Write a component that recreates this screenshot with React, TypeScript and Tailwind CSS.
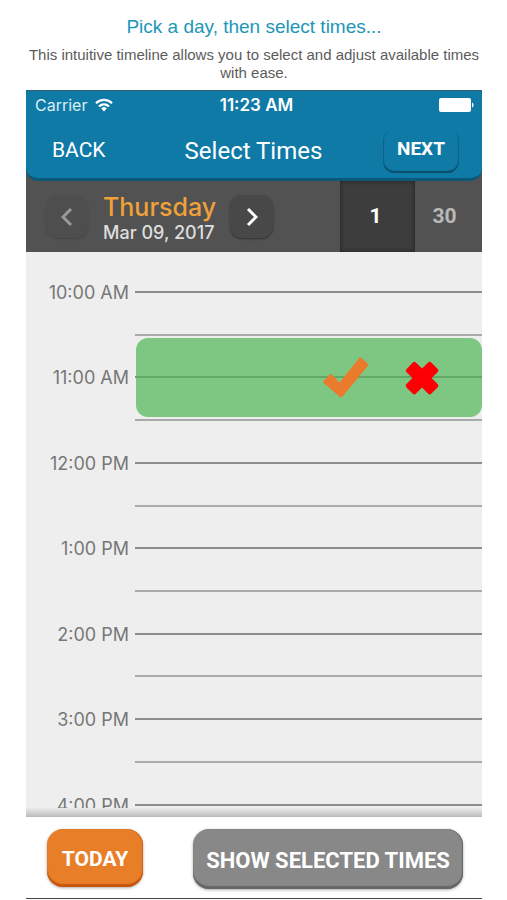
const hours = [
  '10:00 AM',
  '11:00 AM',
  '12:00 PM',
  '1:00 PM',
  '2:00 PM',
  '3:00 PM',
  '4:00 PM',
];

function WifiIcon() {
  return (
    <svg width="18" height="14" viewBox="0 0 18 14" fill="none" stroke="#fff" strokeWidth="2.2" aria-hidden="true">
      <path d="M1 5.2a11.3 11.3 0 0 1 16 0" />
      <path d="M4 8.4a7 7 0 0 1 10 0" />
      <path d="M9 13.4 6.2 10.4a4 4 0 0 1 5.6 0Z" fill="#fff" stroke="none" />
    </svg>
  );
}

function BatteryIcon() {
  return (
    <svg width="35" height="14" viewBox="0 0 35 14" fill="#fff" aria-hidden="true">
      <rect width="32" height="14" rx="2" />
      <path d="M33 4.5c2 .8 2 4.2 0 5Z" />
    </svg>
  );
}

function Chevron({ left = false }: { left?: boolean }) {
  return (
    <svg width="12" height="20" viewBox="0 0 12 20" fill="none" stroke="currentColor" strokeWidth="3" aria-hidden="true">
      <path d={left ? 'M10 2 2 10l8 8' : 'M2 2l8 8-8 8'} />
    </svg>
  );
}

function CheckIcon() {
  return (
    <svg width="46" height="42" viewBox="0 0 46 42" aria-hidden="true">
      <path
        d="M.6 24 6.800 17.600q1-1 2 0L16.500 25.500 36.400.8q.9-1 1.900-.1L45 7q.8.8 0 1.800L19.600 39.500q-1.300 1.500-2.900.2L.7 26q-1-1 -.1-2Z"
        fill="#ea7a2c"
      />
    </svg>
  );
}

function CrossIcon() {
  return (
    <svg width="34" height="34" viewBox="0 0 34 34" aria-hidden="true">
      <path
        d="M1.2 8.4 7.8 1.4q1.5-1.2 3 0l6.2 6.2 6.2-6.2q1.5-1.2 3 0l6.600 6.600q1.2 1.5 0 3L26.600 17l6.200 6.200q1.2 1.5 0 3l-6.600 6.600q-1.500 1.200-3 0L17 26.600l-6.200 6.200q-1.500 1.200-3 0l-6.600-6.600q-1.200-1.500 0-3L7.400 17 1.200 10.800q-1-1.200 0-2.400Z"
        fill="#fd0006"
      />
    </svg>
  );
}

function SelectedSlot() {
  return (
    <div className="absolute inset-x-0 -top-7 ml-px flex h-[79px] items-center justify-end gap-9 rounded-xl bg-[#4fb655]/70 pr-[43px]">
      <button type="button" aria-label="Confirm time">
        <CheckIcon />
      </button>
      <button type="button" aria-label="Remove time">
        <CrossIcon />
      </button>
    </div>
  );
}

export default function App() {
  return (
    <div className="bg-white pr-[25px] pl-[26px] font-['Roboto',sans-serif]">
      <div className="-mx-2 pt-4 pb-2 text-center font-['Liberation_Sans_Narrow','Liberation_Sans',sans-serif]">
        <h1 className="text-[19px] leading-[22px] text-[#2196b8]">Pick a day, then select times...</h1>
        <p className="pt-2 text-[15px] leading-[18px] text-[#5c5c5c]">
          This intuitive timeline allows you to select and adjust available times with ease.
        </p>
      </div>

      <div className="bg-[#525252]">
        <header className="rounded-b-xl border-t border-b-3 border-t-[#315f76] border-b-[#0b5878] bg-[#107aa7] text-white">
          <div className="grid grid-cols-3 items-center pr-2 pl-[9px] pt-[3px] font-['Inter',sans-serif] text-[16px] leading-[22px]">
            <span className="flex items-center gap-2 text-[#d9eef6]">
              Carrier <WifiIcon />
            </span>
            <span className="pl-1 text-center text-[17px] font-semibold">11:23 AM</span>
            <span className="flex justify-end">
              <BatteryIcon />
            </span>
          </div>
          <div className="grid h-[62px] grid-cols-[1fr_auto_1fr] items-center pt-2 pr-[23px] pl-[26px]">
            <button type="button" className="justify-self-start text-[21px]">BACK</button>
            <h2 className="pr-1 text-[24px]">Select Times</h2>
            <button
              type="button"
              className="h-11 w-[76px] justify-self-end rounded-xl pb-1 text-[19px] font-bold shadow-[inset_0_-3px_1px_-1px_#0b4f6c,inset_1px_-1px_1px_#0d6085,inset_-1px_-1px_1px_#0d6085]"
            >
              NEXT
            </button>
          </div>
        </header>

        <div className="flex h-[71px] items-center pl-5">
          <button
            type="button"
            aria-label="Previous day"
            className="flex size-[42px] items-center justify-center rounded-xl bg-[#4e4e4e] text-[#9a9a9a] shadow-[0_1px_2px_#454545]"
          >
            <Chevron left />
          </button>
          <div className="pt-1 pl-[15px] font-['Inter',sans-serif] whitespace-nowrap">
            <div className="text-[25px] leading-7 font-medium text-[#f0a139]">Thursday</div>
            <div className="text-[18px] leading-6 font-medium text-[#dedede]">Mar 09, 2017</div>
          </div>
          <button
            type="button"
            aria-label="Next day"
            className="ml-[14px] flex size-[43px] items-center justify-center rounded-xl bg-[#484848] text-white shadow-[0_1px_2px_#303030]"
          >
            <Chevron />
          </button>
          <div className="ml-auto flex self-stretch text-[21px] font-bold">
            <button type="button" aria-pressed="true" className="w-[75px] bg-[#3d3d3d] pr-1 text-white shadow-[inset_0_0_5px_#222]">
              1
            </button>
            <button type="button" aria-pressed="false" className="w-[67px] pr-2 text-[#b9b9b9]">
              30
            </button>
          </div>
        </div>
      </div>

      <main className="h-[556px] overflow-hidden bg-[#eeeeee] pt-[29px]">
        <div className="grid h-[598px] grid-rows-7">
          {hours.map((hour) => (
            <div key={hour} className="flex gap-[6px]">
              <div className="w-[103px] text-right font-['Inter',sans-serif] text-[18px] leading-6 text-[#777777]">{hour}</div>
              <div className="relative flex-1">
                <div className="h-1/2 pt-[10px]">
                  <div className="h-0.5 bg-[#8c8c8c]" />
                </div>
                <div className="h-1/2 pt-[10px]">
                  <div className="h-0.5 bg-[#aaaaaa]" />
                </div>
                {hour === '11:00 AM' && <SelectedSlot />}
              </div>
            </div>
          ))}
        </div>
      </main>

      <footer>
        <div className="h-[9px] bg-linear-to-b from-[#ebebeb] to-[#bababa]" />
        <div className="flex h-[82px] items-start justify-between border-b border-[#444] pt-3 pr-[19px] pl-[21px] font-bold text-white">
          <button
            type="button"
            className="h-[58px] w-24 rounded-2xl bg-[#e87e28] pt-1 text-[21px] shadow-[inset_0_-3px_1px_#c7560c,inset_-1px_0_1px_#cf661a,0_1px_3px_#aaa]"
          >
            TODAY
          </button>
          <button
            type="button"
            className="h-[60px] w-[270px] rounded-2xl bg-[#888888] pt-0.5 text-[22px] whitespace-nowrap shadow-[inset_0_-3px_1px_#666,inset_-1px_0_1px_#666,0_1px_3px_#aaa]"
          >
            SHOW SELECTED TIMES
          </button>
        </div>
      </footer>
    </div>
  );
}
